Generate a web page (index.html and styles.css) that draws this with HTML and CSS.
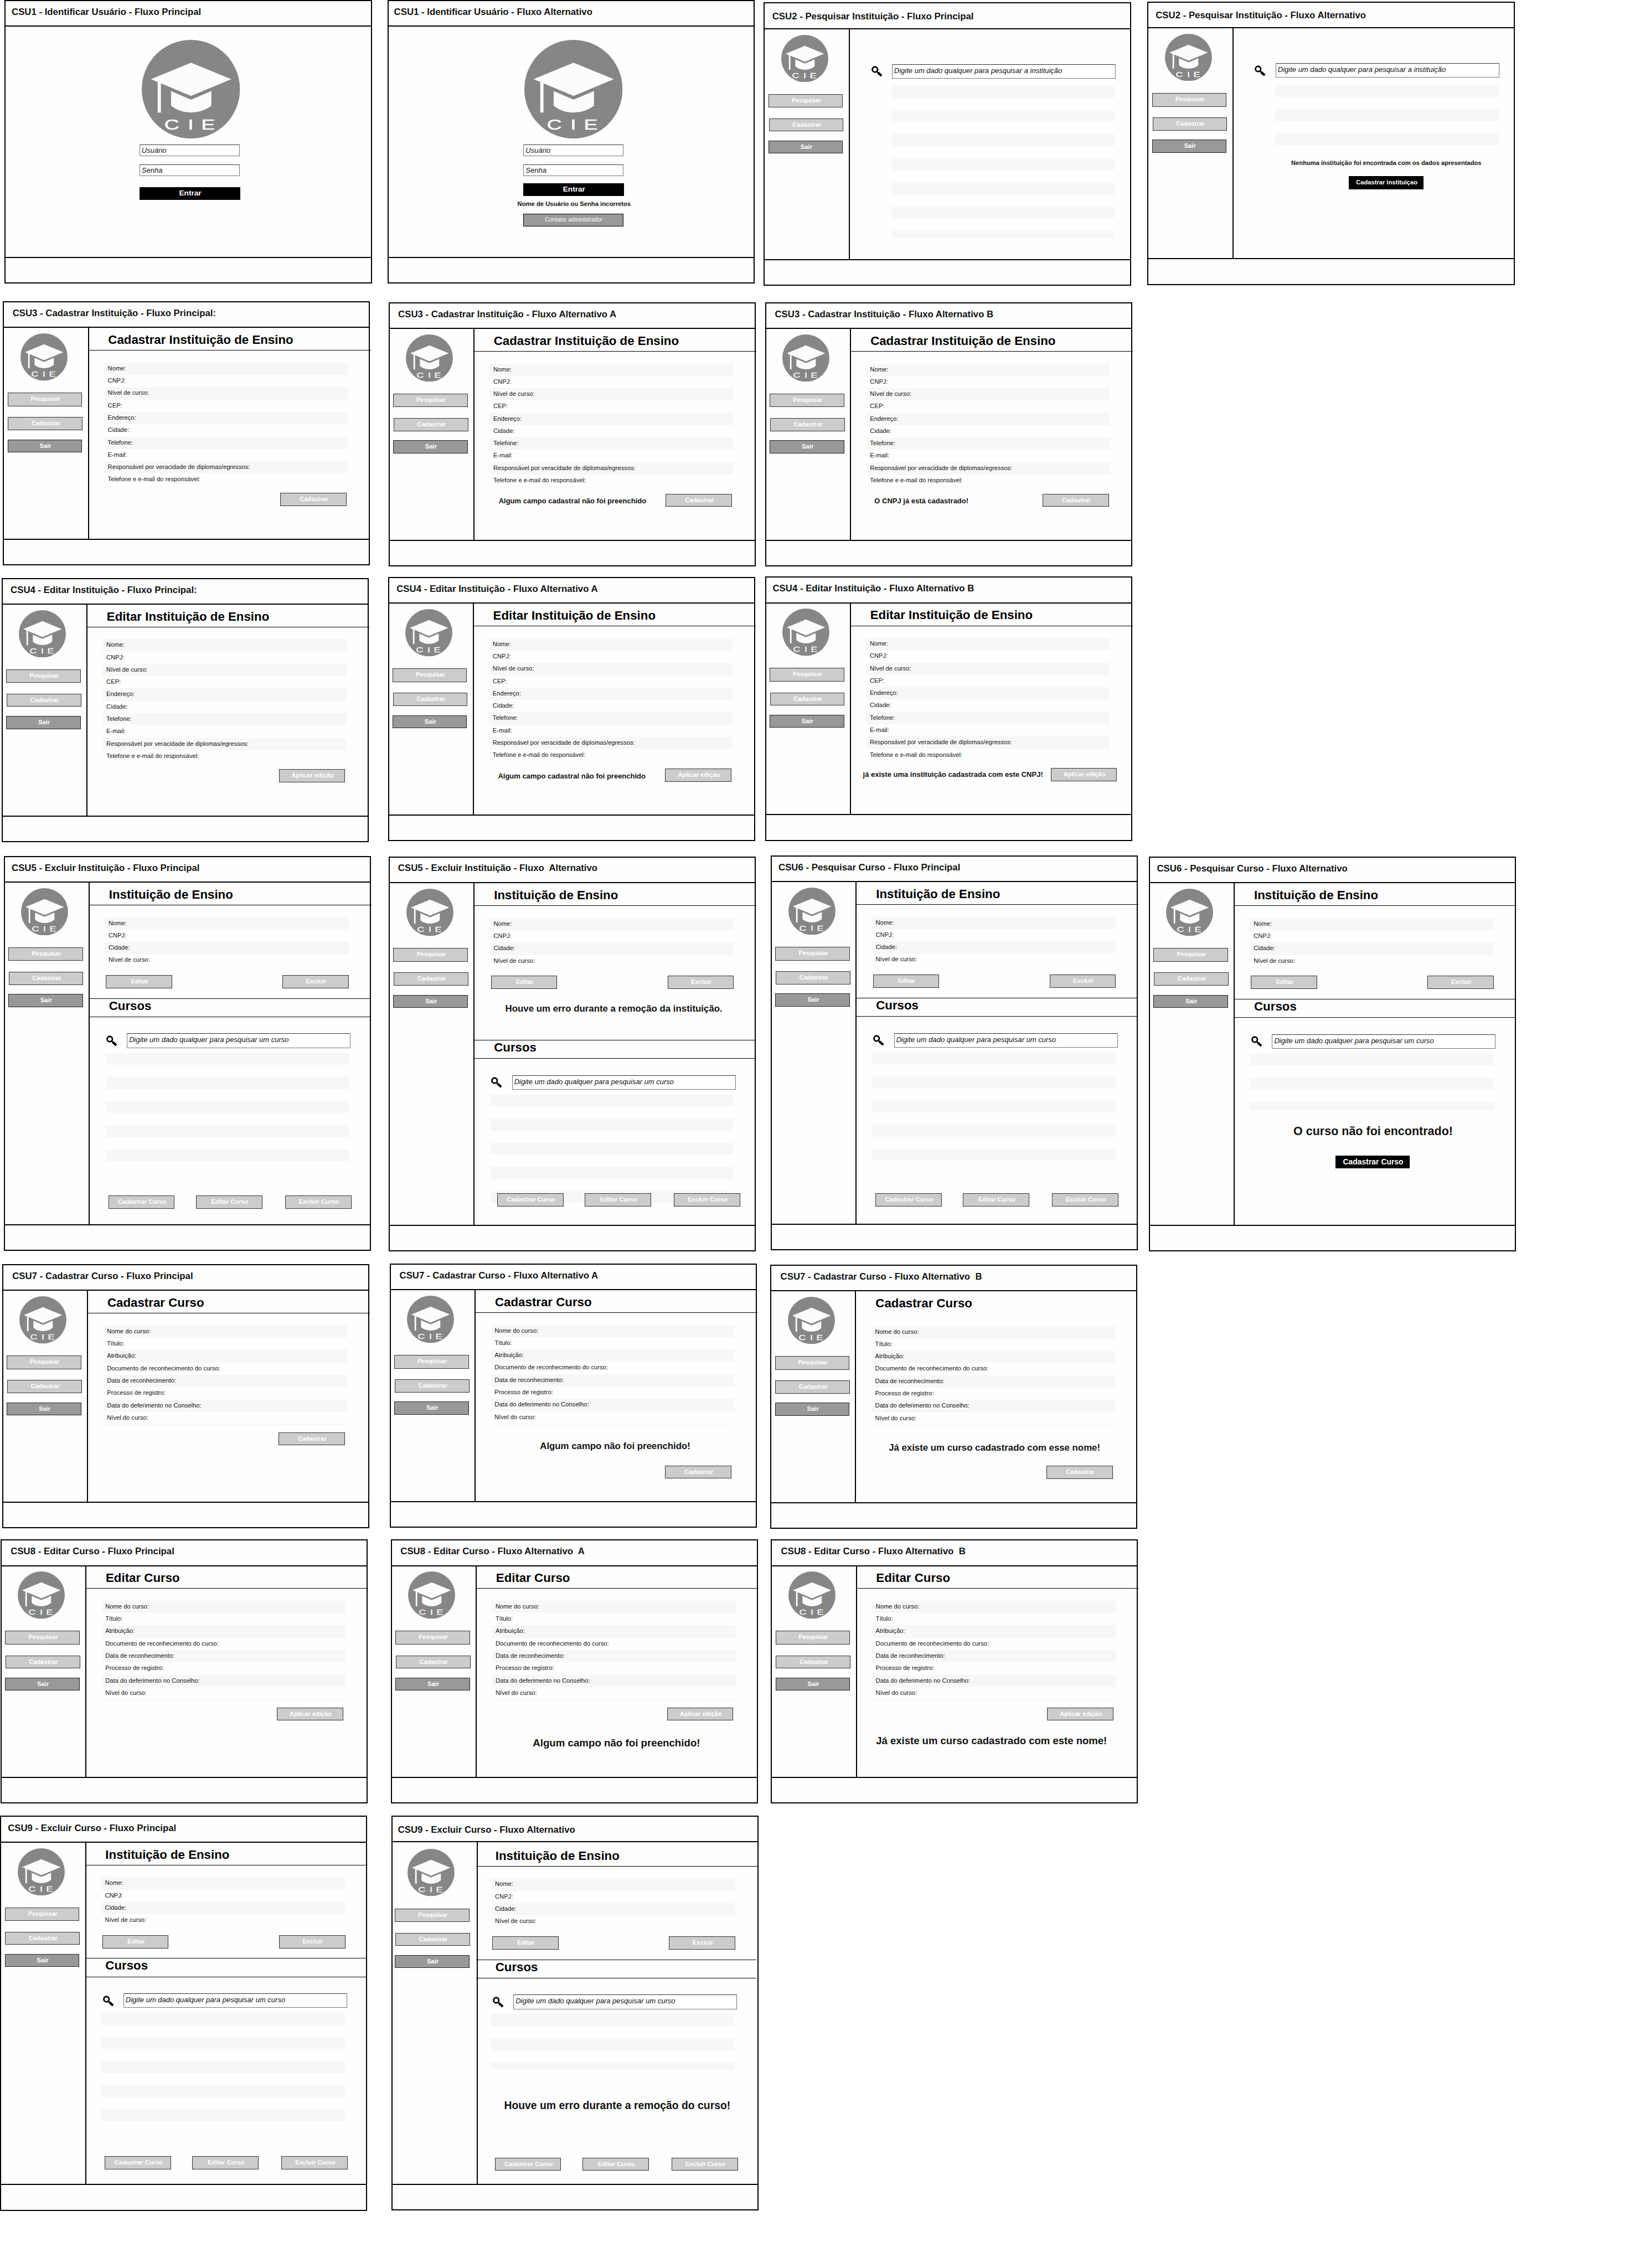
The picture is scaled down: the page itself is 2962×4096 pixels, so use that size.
FILE: index.html
```html
<!DOCTYPE html>
<html lang="pt-BR">
<head>
<meta charset="utf-8">
<title>CIE - Casos de uso</title>
<link rel="stylesheet" href="styles.css">
</head>
<body>
<svg class="defs" width="0" height="0">
  <symbol id="cap" viewBox="0 0 191 192">
    <ellipse cx="95.5" cy="96" rx="95.5" ry="96" fill="#868686"/>
    <path d="M18 76.4 95.8 44.3 174 76.4 95.8 109 37.3 84.4V141.4H31V81.8Z" fill="#fcfcfc"/>
    <path d="M57 99.6 95.8 116.4 135.4 99.6V128.2Q118 141.4 95.8 141.4T57 128.2Z" fill="#fcfcfc"/>
  </symbol>
  <symbol id="lens" viewBox="0 0 21 21">
    <circle cx="6.7" cy="7" r="5.1" fill="none" stroke="#000" stroke-width="3"/>
    <path d="M10.3 11 12.5 13" stroke="#000" stroke-width="2.4"/>
    <path d="M12.2 12.8 19.6 19.4" stroke="#000" stroke-width="4.6"/>
  </symbol>
</svg>
<main class="board">

  <section class="frame login" id="csu1-p">
    <h2 class="title">CSU1 - Identificar Usuário - Fluxo Principal</h2>
    <div class="body"><div class="form">
      <svg class="logo" viewBox="0 0 191 192"><use href="#cap"/><text x="31.3 64.1 82.7" y="174.2" transform="scale(1.4 1)">CIE</text></svg>
      <div class="field">Usuário</div>
      <div class="field">Senha</div>
      <div class="enter">Entrar</div>
    </div></div>
    <div class="foot"></div>
  </section>

  <section class="frame login" id="csu1-a">
    <h2 class="title">CSU1 - Identificar Usuário - Fluxo Alternativo</h2>
    <div class="body"><div class="form">
      <svg class="logo" viewBox="0 0 191 192"><use href="#cap"/><text x="31.3 64.1 82.7" y="174.2" transform="scale(1.4 1)">CIE</text></svg>
      <div class="field">Usuário</div>
      <div class="field">Senha</div>
      <div class="enter">Entrar</div>
      <p class="error">Nome de Usuário ou Senha incorretos</p>
      <div class="contact">Contatar administrador</div>
    </div></div>
    <div class="foot"></div>
  </section>

  <section class="frame short" id="csu2-p">
    <h2 class="title">CSU2 - Pesquisar Instituição - Fluxo Principal</h2>
    <div class="body">
      <nav class="side"><svg class="logo" viewBox="0 0 191 192"><use href="#cap"/><text x="31.3 64.1 82.7" y="174.2" transform="scale(1.4 1)">CIE</text></svg><div class="btn">Pesquisar</div><div class="btn">Cadastrar</div><div class="btn dark">Sair</div></nav>
      <div class="main">
        <div class="search"><svg class="lens"><use href="#lens"/></svg><div class="field">Digite um dado qualquer para pesquisar a instituição</div></div>
        <ul class="bars"><li></li><li></li><li></li><li></li><li></li><li></li><li class="cut"></li></ul>
      </div>
    </div>
    <div class="foot"></div>
  </section>

  <section class="frame short" id="csu2-a">
    <h2 class="title">CSU2 - Pesquisar Instituição - Fluxo Alternativo</h2>
    <div class="body">
      <nav class="side"><svg class="logo" viewBox="0 0 191 192"><use href="#cap"/><text x="31.3 64.1 82.7" y="174.2" transform="scale(1.4 1)">CIE</text></svg><div class="btn">Pesquisar</div><div class="btn">Cadastrar</div><div class="btn dark">Sair</div></nav>
      <div class="main">
        <div class="search"><svg class="lens"><use href="#lens"/></svg><div class="field">Digite um dado qualquer para pesquisar a instituição</div></div>
        <ul class="bars"><li></li><li></li><li></li></ul>
        <p class="msg">Nenhuma instituição foi encontrada com os dados apresentados</p>
        <div class="btn black">Cadastrar instituiçao</div>
      </div>
    </div>
    <div class="foot"></div>
  </section>

  <section class="frame medium" id="csu3-p">
    <h2 class="title">CSU3 - Cadastrar Instituição - Fluxo Principal:</h2>
    <div class="body">
      <nav class="side"><svg class="logo" viewBox="0 0 191 192"><use href="#cap"/><text x="31.3 64.1 82.7" y="174.2" transform="scale(1.4 1)">CIE</text></svg><div class="btn">Pesquisar</div><div class="btn">Cadastrar</div><div class="btn dark">Sair</div></nav>
      <div class="main">
        <h3 class="heading">Cadastrar Instituição de Ensino</h3>
        <ul class="rows"><li>Nome:</li><li>CNPJ:</li><li>Nível de curso:</li><li>CEP:</li><li>Endereço:</li><li>Cidade:</li><li>Telefone:</li><li>E-mail:</li><li>Responsável por veracidade de diplomas/egressos:</li><li>Telefone e e-mail do responsável:</li></ul>
        <div class="actions"><div class="btn">Cadastrar</div></div>
      </div>
    </div>
    <div class="foot"></div>
  </section>

  <section class="frame medium" id="csu3-a">
    <h2 class="title">CSU3 - Cadastrar Instituição - Fluxo Alternativo A</h2>
    <div class="body">
      <nav class="side"><svg class="logo" viewBox="0 0 191 192"><use href="#cap"/><text x="31.3 64.1 82.7" y="174.2" transform="scale(1.4 1)">CIE</text></svg><div class="btn">Pesquisar</div><div class="btn">Cadastrar</div><div class="btn dark">Sair</div></nav>
      <div class="main">
        <h3 class="heading">Cadastrar Instituição de Ensino</h3>
        <ul class="rows"><li>Nome:</li><li>CNPJ:</li><li>Nível de curso:</li><li>CEP:</li><li>Endereço:</li><li>Cidade:</li><li>Telefone:</li><li>E-mail:</li><li>Responsável por veracidade de diplomas/egressos:</li><li>Telefone e e-mail do responsável:</li></ul>
        <div class="actions"><p class="note">Algum campo cadastral não foi preenchido</p><div class="btn">Cadastrar</div></div>
      </div>
    </div>
    <div class="foot"></div>
  </section>

  <section class="frame medium" id="csu3-b">
    <h2 class="title">CSU3 - Cadastrar Instituição - Fluxo Alternativo B</h2>
    <div class="body">
      <nav class="side"><svg class="logo" viewBox="0 0 191 192"><use href="#cap"/><text x="31.3 64.1 82.7" y="174.2" transform="scale(1.4 1)">CIE</text></svg><div class="btn">Pesquisar</div><div class="btn">Cadastrar</div><div class="btn dark">Sair</div></nav>
      <div class="main">
        <h3 class="heading">Cadastrar Instituição de Ensino</h3>
        <ul class="rows"><li>Nome:</li><li>CNPJ:</li><li>Nível de curso:</li><li>CEP:</li><li>Endereço:</li><li>Cidade:</li><li>Telefone:</li><li>E-mail:</li><li>Responsável por veracidade de diplomas/egressos:</li><li>Telefone e e-mail do responsável:</li></ul>
        <div class="actions"><p class="note">O CNPJ já está cadastrado!</p><div class="btn">Cadastrar</div></div>
      </div>
    </div>
    <div class="foot"></div>
  </section>

  <section class="frame medium" id="csu4-p">
    <h2 class="title">CSU4 - Editar Instituição - Fluxo Principal:</h2>
    <div class="body">
      <nav class="side"><svg class="logo" viewBox="0 0 191 192"><use href="#cap"/><text x="31.3 64.1 82.7" y="174.2" transform="scale(1.4 1)">CIE</text></svg><div class="btn">Pesquisar</div><div class="btn">Cadastrar</div><div class="btn dark">Sair</div></nav>
      <div class="main">
        <h3 class="heading">Editar Instituição de Ensino</h3>
        <ul class="rows"><li>Nome:</li><li>CNPJ:</li><li>Nível de curso:</li><li>CEP:</li><li>Endereço:</li><li>Cidade:</li><li>Telefone:</li><li>E-mail:</li><li>Responsável por veracidade de diplomas/egressos:</li><li>Telefone e e-mail do responsável:</li></ul>
        <div class="actions"><div class="btn">Aplicar edição</div></div>
      </div>
    </div>
    <div class="foot"></div>
  </section>

  <section class="frame medium" id="csu4-a">
    <h2 class="title">CSU4 - Editar Instituição - Fluxo Alternativo A</h2>
    <div class="body">
      <nav class="side"><svg class="logo" viewBox="0 0 191 192"><use href="#cap"/><text x="31.3 64.1 82.7" y="174.2" transform="scale(1.4 1)">CIE</text></svg><div class="btn">Pesquisar</div><div class="btn">Cadastrar</div><div class="btn dark">Sair</div></nav>
      <div class="main">
        <h3 class="heading">Editar Instituição de Ensino</h3>
        <ul class="rows"><li>Nome:</li><li>CNPJ:</li><li>Nível de curso:</li><li>CEP:</li><li>Endereço:</li><li>Cidade:</li><li>Telefone:</li><li>E-mail:</li><li>Responsável por veracidade de diplomas/egressos:</li><li>Telefone e e-mail do responsável:</li></ul>
        <div class="actions"><p class="note">Algum campo cadastral não foi preenchido</p><div class="btn">Aplicar edição</div></div>
      </div>
    </div>
    <div class="foot"></div>
  </section>

  <section class="frame medium" id="csu4-b">
    <h2 class="title">CSU4 - Editar Instituição - Fluxo Alternativo B</h2>
    <div class="body">
      <nav class="side"><svg class="logo" viewBox="0 0 191 192"><use href="#cap"/><text x="31.3 64.1 82.7" y="174.2" transform="scale(1.4 1)">CIE</text></svg><div class="btn">Pesquisar</div><div class="btn">Cadastrar</div><div class="btn dark">Sair</div></nav>
      <div class="main">
        <h3 class="heading">Editar Instituição de Ensino</h3>
        <ul class="rows"><li>Nome:</li><li>CNPJ:</li><li>Nível de curso:</li><li>CEP:</li><li>Endereço:</li><li>Cidade:</li><li>Telefone:</li><li>E-mail:</li><li>Responsável por veracidade de diplomas/egressos:</li><li>Telefone e e-mail do responsável:</li></ul>
        <div class="actions"><p class="note">já existe uma instituição cadastrada com este CNPJ!</p><div class="btn">Aplicar edição</div></div>
      </div>
    </div>
    <div class="foot"></div>
  </section>

  <section class="frame tall" id="csu5-p">
    <h2 class="title">CSU5 - Excluir Instituição - Fluxo Principal</h2>
    <div class="body">
      <nav class="side"><svg class="logo" viewBox="0 0 191 192"><use href="#cap"/><text x="31.3 64.1 82.7" y="174.2" transform="scale(1.4 1)">CIE</text></svg><div class="btn">Pesquisar</div><div class="btn">Cadastrar</div><div class="btn dark">Sair</div></nav>
      <div class="main">
        <h3 class="heading">Instituição de Ensino</h3>
        <ul class="rows"><li>Nome:</li><li>CNPJ:</li><li>Cidade:</li><li>Nível de curso:</li></ul>
        <div class="pair"><div class="btn">Editar</div><div class="btn">Excluir</div></div>
        <h3 class="heading sub">Cursos</h3>
        <div class="search"><svg class="lens"><use href="#lens"/></svg><div class="field">Digite um dado qualquer para pesquisar um curso</div></div>
        <ul class="bars"><li></li><li></li><li></li><li></li><li></li><li class="end"></li></ul>
        <div class="trio"><div class="btn">Cadastrar Curso</div><div class="btn">Editar Curso</div><div class="btn">Excluir Curso</div></div>
      </div>
    </div>
    <div class="foot"></div>
  </section>

  <section class="frame tall" id="csu5-a">
    <h2 class="title">CSU5 - Excluir Instituição - Fluxo  Alternativo</h2>
    <div class="body">
      <nav class="side"><svg class="logo" viewBox="0 0 191 192"><use href="#cap"/><text x="31.3 64.1 82.7" y="174.2" transform="scale(1.4 1)">CIE</text></svg><div class="btn">Pesquisar</div><div class="btn">Cadastrar</div><div class="btn dark">Sair</div></nav>
      <div class="main">
        <h3 class="heading">Instituição de Ensino</h3>
        <ul class="rows"><li>Nome:</li><li>CNPJ:</li><li>Cidade:</li><li>Nível de curso:</li></ul>
        <div class="pair"><div class="btn">Editar</div><div class="btn">Excluir</div></div>
        <p class="msg">Houve um erro durante a remoção da instituição.</p>
        <h3 class="heading sub">Cursos</h3>
        <div class="search"><svg class="lens"><use href="#lens"/></svg><div class="field">Digite um dado qualquer para pesquisar um curso</div></div>
        <ul class="bars"><li></li><li></li><li></li><li></li><li></li><li class="end"></li></ul>
        <div class="trio"><div class="btn">Cadastrar Curso</div><div class="btn">Editar Curso</div><div class="btn">Excluir Curso</div></div>
      </div>
    </div>
    <div class="foot"></div>
  </section>

  <section class="frame tall" id="csu6-p">
    <h2 class="title">CSU6 - Pesquisar Curso - Fluxo Principal</h2>
    <div class="body">
      <nav class="side"><svg class="logo" viewBox="0 0 191 192"><use href="#cap"/><text x="31.3 64.1 82.7" y="174.2" transform="scale(1.4 1)">CIE</text></svg><div class="btn">Pesquisar</div><div class="btn">Cadastrar</div><div class="btn dark">Sair</div></nav>
      <div class="main">
        <h3 class="heading">Instituição de Ensino</h3>
        <ul class="rows"><li>Nome:</li><li>CNPJ:</li><li>Cidade:</li><li>Nível de curso:</li></ul>
        <div class="pair"><div class="btn">Editar</div><div class="btn">Excluir</div></div>
        <h3 class="heading sub">Cursos</h3>
        <div class="search"><svg class="lens"><use href="#lens"/></svg><div class="field">Digite um dado qualquer para pesquisar um curso</div></div>
        <ul class="bars"><li></li><li></li><li></li><li></li><li></li><li class="end"></li></ul>
        <div class="trio"><div class="btn">Cadastrar Curso</div><div class="btn">Editar Curso</div><div class="btn">Excluir Curso</div></div>
      </div>
    </div>
    <div class="foot"></div>
  </section>

  <section class="frame tall" id="csu6-a">
    <h2 class="title">CSU6 - Pesquisar Curso - Fluxo Alternativo</h2>
    <div class="body">
      <nav class="side"><svg class="logo" viewBox="0 0 191 192"><use href="#cap"/><text x="31.3 64.1 82.7" y="174.2" transform="scale(1.4 1)">CIE</text></svg><div class="btn">Pesquisar</div><div class="btn">Cadastrar</div><div class="btn dark">Sair</div></nav>
      <div class="main">
        <h3 class="heading">Instituição de Ensino</h3>
        <ul class="rows"><li>Nome:</li><li>CNPJ:</li><li>Cidade:</li><li>Nível de curso:</li></ul>
        <div class="pair"><div class="btn">Editar</div><div class="btn">Excluir</div></div>
        <h3 class="heading sub">Cursos</h3>
        <div class="search"><svg class="lens"><use href="#lens"/></svg><div class="field">Digite um dado qualquer para pesquisar um curso</div></div>
        <ul class="bars"><li></li><li></li><li class="cut"></li></ul>
        <p class="msg">O curso não foi encontrado!</p>
        <div class="btn black">Cadastrar Curso</div>
      </div>
    </div>
    <div class="foot"></div>
  </section>

  <section class="frame medium" id="csu7-p">
    <h2 class="title">CSU7 - Cadastrar Curso - Fluxo Principal</h2>
    <div class="body">
      <nav class="side"><svg class="logo" viewBox="0 0 191 192"><use href="#cap"/><text x="31.3 64.1 82.7" y="174.2" transform="scale(1.4 1)">CIE</text></svg><div class="btn">Pesquisar</div><div class="btn">Cadastrar</div><div class="btn dark">Sair</div></nav>
      <div class="main">
        <h3 class="heading">Cadastrar Curso</h3>
        <ul class="rows course"><li>Nome do curso:</li><li>Título:</li><li>Atribuição:</li><li>Documento de reconhecimento do curso:</li><li>Data de reconhecimento:</li><li>Processo de registro:</li><li>Data do deferimento no Conselho:</li><li>Nível do curso:</li></ul>
        <div class="actions"><div class="btn">Cadastrar</div></div>
      </div>
    </div>
    <div class="foot"></div>
  </section>

  <section class="frame medium" id="csu7-a">
    <h2 class="title">CSU7 - Cadastrar Curso - Fluxo Alternativo A</h2>
    <div class="body">
      <nav class="side"><svg class="logo" viewBox="0 0 191 192"><use href="#cap"/><text x="31.3 64.1 82.7" y="174.2" transform="scale(1.4 1)">CIE</text></svg><div class="btn">Pesquisar</div><div class="btn">Cadastrar</div><div class="btn dark">Sair</div></nav>
      <div class="main">
        <h3 class="heading">Cadastrar Curso</h3>
        <ul class="rows course"><li>Nome do curso:</li><li>Título:</li><li>Atribuição:</li><li>Documento de reconhecimento do curso:</li><li>Data de reconhecimento:</li><li>Processo de registro:</li><li>Data do deferimento no Conselho:</li><li>Nível do curso:</li></ul>
        <p class="msg">Algum campo não foi preenchido!</p>
        <div class="actions"><div class="btn">Cadastrar</div></div>
      </div>
    </div>
    <div class="foot"></div>
  </section>

  <section class="frame medium" id="csu7-b">
    <h2 class="title">CSU7 - Cadastrar Curso - Fluxo Alternativo  B</h2>
    <div class="body">
      <nav class="side"><svg class="logo" viewBox="0 0 191 192"><use href="#cap"/><text x="31.3 64.1 82.7" y="174.2" transform="scale(1.4 1)">CIE</text></svg><div class="btn">Pesquisar</div><div class="btn">Cadastrar</div><div class="btn dark">Sair</div></nav>
      <div class="main">
        <h3 class="heading">Cadastrar Curso</h3>
        <ul class="rows course"><li>Nome do curso:</li><li>Título:</li><li>Atribuição:</li><li>Documento de reconhecimento do curso:</li><li>Data de reconhecimento:</li><li>Processo de registro:</li><li>Data do deferimento no Conselho:</li><li>Nível do curso:</li></ul>
        <p class="msg">Já existe um curso cadastrado com esse nome!</p>
        <div class="actions"><div class="btn">Cadastrar</div></div>
      </div>
    </div>
    <div class="foot"></div>
  </section>

  <section class="frame medium" id="csu8-p">
    <h2 class="title">CSU8 - Editar Curso - Fluxo Principal</h2>
    <div class="body">
      <nav class="side"><svg class="logo" viewBox="0 0 191 192"><use href="#cap"/><text x="31.3 64.1 82.7" y="174.2" transform="scale(1.4 1)">CIE</text></svg><div class="btn">Pesquisar</div><div class="btn">Cadastrar</div><div class="btn dark">Sair</div></nav>
      <div class="main">
        <h3 class="heading">Editar Curso</h3>
        <ul class="rows course"><li>Nome do curso:</li><li>Título:</li><li>Atribuição:</li><li>Documento de reconhecimento do curso:</li><li>Data de reconhecimento:</li><li>Processo de registro:</li><li>Data do deferimento no Conselho:</li><li>Nível do curso:</li></ul>
        <div class="actions"><div class="btn">Aplicar edição</div></div>
      </div>
    </div>
    <div class="foot"></div>
  </section>

  <section class="frame medium" id="csu8-a">
    <h2 class="title">CSU8 - Editar Curso - Fluxo Alternativo  A</h2>
    <div class="body">
      <nav class="side"><svg class="logo" viewBox="0 0 191 192"><use href="#cap"/><text x="31.3 64.1 82.7" y="174.2" transform="scale(1.4 1)">CIE</text></svg><div class="btn">Pesquisar</div><div class="btn">Cadastrar</div><div class="btn dark">Sair</div></nav>
      <div class="main">
        <h3 class="heading">Editar Curso</h3>
        <ul class="rows course"><li>Nome do curso:</li><li>Título:</li><li>Atribuição:</li><li>Documento de reconhecimento do curso:</li><li>Data de reconhecimento:</li><li>Processo de registro:</li><li>Data do deferimento no Conselho:</li><li>Nível do curso:</li></ul>
        <div class="actions"><div class="btn">Aplicar edição</div></div>
        <p class="msg">Algum campo não foi preenchido!</p>
      </div>
    </div>
    <div class="foot"></div>
  </section>

  <section class="frame medium" id="csu8-b">
    <h2 class="title">CSU8 - Editar Curso - Fluxo Alternativo  B</h2>
    <div class="body">
      <nav class="side"><svg class="logo" viewBox="0 0 191 192"><use href="#cap"/><text x="31.3 64.1 82.7" y="174.2" transform="scale(1.4 1)">CIE</text></svg><div class="btn">Pesquisar</div><div class="btn">Cadastrar</div><div class="btn dark">Sair</div></nav>
      <div class="main">
        <h3 class="heading">Editar Curso</h3>
        <ul class="rows course"><li>Nome do curso:</li><li>Título:</li><li>Atribuição:</li><li>Documento de reconhecimento do curso:</li><li>Data de reconhecimento:</li><li>Processo de registro:</li><li>Data do deferimento no Conselho:</li><li>Nível do curso:</li></ul>
        <div class="actions"><div class="btn">Aplicar edição</div></div>
        <p class="msg">Já existe um curso cadastrado com este nome!</p>
      </div>
    </div>
    <div class="foot"></div>
  </section>

  <section class="frame tall" id="csu9-p">
    <h2 class="title">CSU9 - Excluir Curso - Fluxo Principal</h2>
    <div class="body">
      <nav class="side"><svg class="logo" viewBox="0 0 191 192"><use href="#cap"/><text x="31.3 64.1 82.7" y="174.2" transform="scale(1.4 1)">CIE</text></svg><div class="btn">Pesquisar</div><div class="btn">Cadastrar</div><div class="btn dark">Sair</div></nav>
      <div class="main">
        <h3 class="heading">Instituição de Ensino</h3>
        <ul class="rows"><li>Nome:</li><li>CNPJ:</li><li>Cidade:</li><li>Nível de curso:</li></ul>
        <div class="pair"><div class="btn">Editar</div><div class="btn">Excluir</div></div>
        <h3 class="heading sub">Cursos</h3>
        <div class="search"><svg class="lens"><use href="#lens"/></svg><div class="field">Digite um dado qualquer para pesquisar um curso</div></div>
        <ul class="bars"><li></li><li></li><li></li><li></li><li></li><li class="end"></li></ul>
        <div class="trio"><div class="btn">Cadastrar Curso</div><div class="btn">Editar Curso</div><div class="btn">Excluir Curso</div></div>
      </div>
    </div>
    <div class="foot"></div>
  </section>

  <section class="frame tall" id="csu9-a">
    <h2 class="title">CSU9 - Excluir Curso - Fluxo Alternativo</h2>
    <div class="body">
      <nav class="side"><svg class="logo" viewBox="0 0 191 192"><use href="#cap"/><text x="31.3 64.1 82.7" y="174.2" transform="scale(1.4 1)">CIE</text></svg><div class="btn">Pesquisar</div><div class="btn">Cadastrar</div><div class="btn dark">Sair</div></nav>
      <div class="main">
        <h3 class="heading">Instituição de Ensino</h3>
        <ul class="rows"><li>Nome:</li><li>CNPJ:</li><li>Cidade:</li><li>Nível de curso:</li></ul>
        <div class="pair"><div class="btn">Editar</div><div class="btn">Excluir</div></div>
        <h3 class="heading sub">Cursos</h3>
        <div class="search"><svg class="lens"><use href="#lens"/></svg><div class="field">Digite um dado qualquer para pesquisar um curso</div></div>
        <ul class="bars"><li></li><li></li><li class="cut"></li></ul>
        <p class="msg">Houve um erro durante a remoção do curso!</p>
        <div class="trio"><div class="btn">Cadastrar Curso</div><div class="btn">Editar Curso</div><div class="btn">Excluir Curso</div></div>
      </div>
    </div>
    <div class="foot"></div>
  </section>

</main>
</body>
</html>
```
FILE: styles.css
```css
*, *::before, *::after { box-sizing: border-box; }
html, body { margin: 0; background: #fff; overflow: hidden; }
h2, h3, p, ul { margin: 0; padding: 0; font-weight: bold; }
ul { list-style: none; font-weight: normal; }
.defs { display: block; height: 0; }

/* Wireframe canvas: 3189 x 4410 units */
.board {
  position: relative;
  width: 3189px;
  height: 4410px;
  zoom: 0.9288;
  font-family: "Liberation Sans", Arial, sans-serif;
  color: #111;
}

.frame {
  position: absolute;
  display: flex;
  flex-direction: column;
  width: 714px;
  border: 2.2px solid #000;
  background: #fefefe;
}
.login, .short { height: 551px; }
.medium { height: 514px; }
.tall { height: 768px; }

.title {
  flex: none;
  height: 50px;
  border-bottom: 2.2px solid #000;
  padding: var(--ty, 0px) 0 0 calc(var(--tx, 16px) + .8px);
  font-size: 18.08px;
  line-height: 44px;
  white-space: pre;
}
.body { flex: 1; min-height: 0; display: flex; }
.foot { flex: none; height: 49.8px; border-top: 2.2px solid #000; }

/* Logo */
.logo { display: block; flex: none; }
.logo text {
  font-size: 28.6px;
  fill: #fcfcfc;
  stroke: #fcfcfc;
  stroke-width: .6px;
}

/* Sidebar */
.side {
  flex: none;
  width: 165px;
  border-right: 2.2px solid #000;
  padding: 10.5px 0 0 6.8px;
}
.side .logo { width: 91.5px; height: 92px; margin: 0 0 23.3px 24.8px; }
.side .btn { width: 145px; height: 25.2px; margin-bottom: 18.1px; }
.side .btn:nth-of-type(1) { height: 26.4px; margin-bottom: 21.2px; }
.side .btn:nth-of-type(2) { margin-left: .9px; }

.btn {
  flex: none;
  width: 129px;
  height: 25.5px;
  border: 1.1px solid #333;
  background: #ccc;
  color: #fff;
  padding-left: 2.5px;
  font-size: 12px;
  font-weight: bold;
  line-height: 22px;
  text-align: center;
  white-space: nowrap;
}
.btn.dark { background: #999; border-color: #222; }
.btn.black { width: 145px; background: #000; border-color: #000; }

/* Main column */
.main { flex: 1; min-width: 0; }
.heading {
  height: 44.1px;
  margin-right: -3.3px;
  border-bottom: 1.1px solid #000;
  padding: 3px 0 0 37.5px;
  font-size: 24px;
  line-height: 40px;
  color: #000;
}
.heading.sub {
  height: 37px;
  margin: 19.2px 0 0;
  border-top: 1.1px solid #000;
  padding-top: 0;
  line-height: 28.8px;
}
.rows {
  width: 474px;
  margin: 23.1px 0 0 29.5px;
  font-size: 12.05px;
  line-height: 22px;
}
.rows li { height: 24px; padding-left: 7.2px; white-space: nowrap; }
.rows li:nth-child(odd) { background: #f7f7f7; }
.medium .rows { border-bottom: 1.1px solid #f9f9f9; }
.rows.course { border-bottom: 2.2px solid #f7f7f7; }

.actions {
  display: flex;
  justify-content: flex-end;
  width: 501px;
  margin-top: 12.2px;
}
.note { flex: none; font-size: 14px; line-height: 30px; white-space: nowrap; height: 25.5px; }
.pair { display: flex; justify-content: space-between; width: 472.5px; margin: 16.3px 0 0 31.4px; }
.pair .btn { height: 26px; }
.trio { display: flex; width: 472.5px; margin: 42.3px 0 0 36.3px; }
.trio .btn:nth-child(2) { margin-left: 41.3px; }
.trio .btn:nth-child(3) { margin-left: 44.3px; }
.msg { white-space: nowrap; }

/* Search field and result list */
.field {
  border: 1.1px solid #777;
  border-top-color: #333;
  background: #fff;
  padding-left: 3.4px;
  font-size: 14px;
  font-style: italic;
  line-height: 21.4px;
  white-space: nowrap;
}
.search { display: flex; margin: 31.6px 0 0 32.3px; }
.lens { flex: none; width: 21px; height: 21px; margin: 4px 19px 0 0; }
.search .field { width: 435px; height: 28.3px; line-height: 23px; }
.bars { display: flex; flex-direction: column; gap: 23.45px; width: 474px; margin: 9.5px 0 0 29.3px; }
.bars li { height: 23.4px; background: #f7f7f7; }
.bars li.end { height: 1.1px; background: #fcfcfc; }

/* Login */
.form { width: 196px; margin-left: 259.8px; padding-top: 25.8px; }
.form .logo { width: 191px; height: 192px; margin: 0 0 11.2px 5px; }
.form .field { width: 195px; height: 22px; margin-bottom: 17px; }
.enter {
  height: 25px;
  margin-top: 22px;
  background: #000;
  color: #fff;
  padding-left: 2px;
  font-size: 14.7px;
  font-weight: bold;
  line-height: 24px;
  text-align: center;
}
.error { height: 34px; margin: 0 -20px 0 -11.5px; font-size: 12.15px; line-height: 31.6px; white-space: nowrap; }
.contact {
  width: 195px;
  height: 25px;
  border: 1.1px solid #000;
  background: #999;
  color: #fff;
  padding-left: 1px;
  font-size: 11px;
  line-height: 21px;
  text-align: center;
}

/* Frame positions on the canvas and their own adjustments */
#csu1-p { left: 9px; top: 0; --tx: 10.7px; }
#csu1-a { left: 753.2px; top: 0; --tx: 10px; }
#csu1-a .form { margin-left: 262.3px; }
#csu1-a .logo { margin-left: 2.2px; }
#csu1-a .enter { margin: -3px 0 0 -.6px; }

#csu2-p { left: 1485.2px; top: 4.7px; --tx: 13.5px; --ty: 3.4px; }
#csu2-a { left: 2231.3px; top: 3px; --tx: 13px; --ty: 3.6px; }
.short .search { margin: 67.8px 0 0 41.8px; }
.short .bars { width: 434px; margin: 14.2px 0 0 81.5px; }
#csu2-p .cut { height: 14.6px; }
#csu2-a .msg { margin: 23.4px 0 0 112.4px; font-size: 12.02px; line-height: 22px; }
#csu2-a .black { margin: 14.6px 0 0 224.5px; }

#csu3-p { left: 5.7px; top: 585.7px; --tx: 15.8px; --ty: .5px; }
#csu3-a { left: 755.5px; top: 587.5px; --tx: 15.8px; }
#csu3-b { left: 1488px; top: 587.5px; --tx: 15.8px; }
#csu4-p { left: 3px; top: 1123.5px; --tx: 14.6px; --ty: .5px; }
#csu4-a { left: 754.2px; top: 1121.8px; --tx: 14px; }
#csu4-b { left: 1487.5px; top: 1121px; --tx: 12px; }
#csu3-a .note, #csu4-a .note { margin-right: 38px; }
#csu3-a .note, #csu3-b .note { line-height: 28px; }
#csu3-b .note { margin-right: 144px; }
#csu4-b .note { margin-right: 15px; line-height: 25.5px; }
#csu4-b .actions { width: 517.5px; }

#csu5-p { left: 7.2px; top: 1664.2px; --tx: 12.5px; --ty: .6px; }
#csu5-p .bars { margin-left: 30.8px; }
#csu5-a { left: 756px; top: 1665.6px; --tx: 15px; }
#csu5-a .title { line-height: 40px; }
#csu5-a .msg { height: 79.4px; padding-left: 59.4px; font-size: 18.15px; line-height: 76.5px; }
#csu5-a .trio { margin: -43.3px 0 0 43.6px; position: relative; }
#csu6-p { left: 1498.9px; top: 1663.2px; --tx: 12px; --ty: .3px; }
#csu6-p .trio { margin-top: 38.6px; }
#csu6-a { left: 2234px; top: 1665.5px; --tx: 12.7px; --ty: .6px; }
#csu6-a .cut { height: 16.6px; }
#csu6-a .msg { margin: 26.3px 0 0 114px; font-size: 23.15px; line-height: 30px; }
#csu6-a .black { margin: 32px 0 0 195.3px; font-size: 15px; height: 25px; }

#csu7-p { left: 4.2px; top: 2458px; --tx: 16.8px; }
#csu7-a { left: 757.9px; top: 2456.7px; --tx: 16px; }
#csu7-b { left: 1497.9px; top: 2458.8px; --tx: 16.8px; }
#csu8-p { left: 1px; top: 2993.2px; --tx: 16.8px; }
#csu8-a { left: 759.8px; top: 2993.2px; --tx: 16px; }
#csu8-b { left: 1499px; top: 2993.2px; --tx: 16.8px; }
#csu7-p .actions, #csu7-a .actions, #csu7-b .actions,
#csu8-p .actions, #csu8-a .actions, #csu8-b .actions { width: 499px; margin-top: 13.5px; }
#csu7-a .actions { width: 497.3px; }
#csu7-b .heading { border-bottom-color: transparent; }
#csu7-a .msg, #csu7-b .msg { height: 66px; font-size: 18.1px; line-height: 83px; padding-left: 125px; }
#csu7-b .msg { height: 64.5px; padding-left: 63.2px; line-height: 86px; }
#csu8-a .msg, #csu8-b .msg { padding-left: 109px; font-size: 20.15px; line-height: 88.6px; }
#csu8-b .msg { padding-left: 37.3px; font-size: 19.97px; line-height: 80px; }

#csu9-p { left: .3px; top: 3530.8px; --tx: 12px; --ty: .6px; }
#csu9-p .trio { margin-top: 43.4px; }
#csu9-a { left: 761.5px; top: 3530.3px; --tx: 9.3px; --ty: 4px; }
#csu9-a .side { padding: 13px 0 0 4.2px; }
#csu9-a .main { margin: 2.8px 2.8px 0 -2.8px; }
#csu9-a .cut { height: 13.3px; }
#csu9-a .msg { height: 157px; padding-left: 54.4px; font-size: 20.85px; line-height: 140px; }
#csu9-a .trio { margin-top: 15.4px; }
```
